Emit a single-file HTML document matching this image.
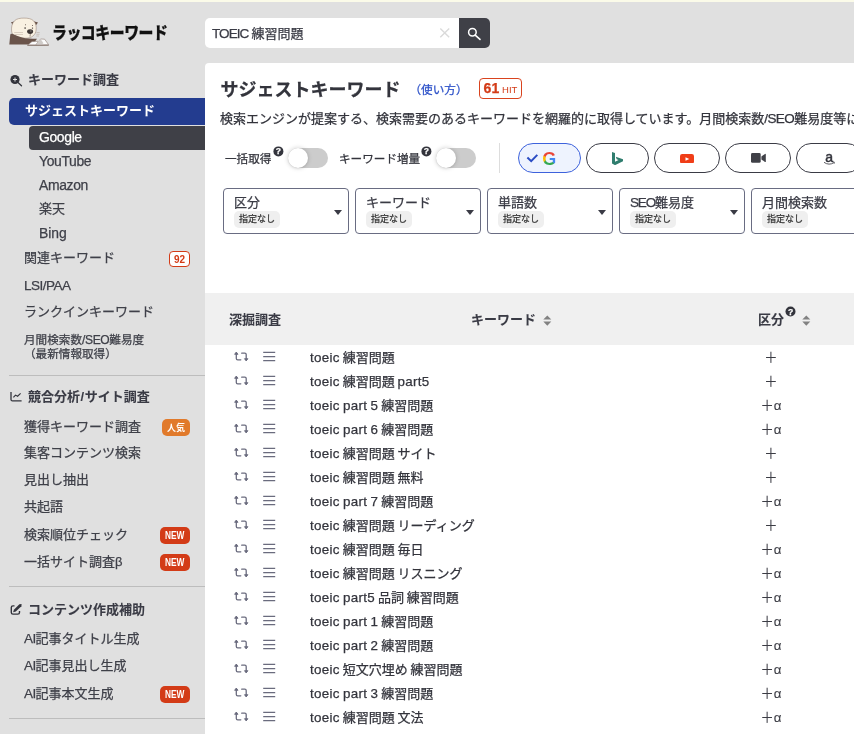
<!DOCTYPE html>
<html lang="ja">
<head>
<meta charset="utf-8">
<title>ラッコキーワード</title>
<style>
*{box-sizing:border-box}
html,body{margin:0;padding:0}
body{width:854px;height:734px;overflow:hidden;position:relative;background:#e0e0e0;
 font-family:"Liberation Sans","Noto Sans CJK JP",sans-serif;color:#3a3b45;font-size:13px;opacity:.999;word-spacing:-.054em;-webkit-text-stroke:.25px}
.abs{position:absolute;white-space:nowrap}
.l{font-size:1.03em;letter-spacing:.022em}
.u{font-size:1.04em;letter-spacing:-.045em}
.m{font-size:1.07em;letter-spacing:-.025em}
#topband{left:0;top:0;width:854px;height:2px;background:#fbfbe9}
/* header */
#logotext{left:52px;top:19.500px;height:28px;line-height:28px;font-size:17px;font-weight:900;color:#111;
 transform-origin:0 50%;transform:scaleX(.875);letter-spacing:-.5px}
#search{left:205px;top:18px;width:254px;height:30px;background:#fff;border-radius:5px 0 0 5px}
#search .t{left:7px;top:1.300px;line-height:30px;font-size:13px;color:#3a3b45}
#search .x{left:232px;top:0;line-height:29px;font-size:19px;color:#bbb;font-weight:400}
#sbtn{left:459px;top:18px;width:31px;height:30px;background:#3f4047;border-radius:0 5px 5px 0}
/* sidebar */
.sh{left:28px;-webkit-text-stroke:.08px;font-size:13px;font-weight:700;color:#3a3b45;height:20px;line-height:20px}
.si{left:24px;font-size:13px;color:#3f4049;height:20px;line-height:20px}
.ss{left:39px;font-size:13px;color:#3f4049;height:20px;line-height:20px}
.hr{left:9px;width:196px;height:1px;background:#bdbdbd}
.bdg{height:17px;line-height:18px;border-radius:5px;color:#fff;font-size:9px;font-weight:700;text-align:center;-webkit-text-stroke:0}
.bdg b{display:inline-block;transform:scaleX(.83);font-size:10px;line-height:18px;vertical-align:top}
.new{left:160px;width:30px;background:#d33b17}
.pop{left:162px;width:28px;background:#e17a2b}
/* main */
#main{left:205px;top:63px;width:660px;height:680px;background:#fff;border-radius:4px 0 0 0}
#thead{left:205px;top:293px;width:649px;height:52px;background:#f0f0f0}
.th{-webkit-text-stroke:.08px;font-size:13px;font-weight:700;color:#3a3b45;height:20px;line-height:20px;top:310px}
.fbox{top:188px;width:126px;height:46px;border:1px solid #696c82;border-radius:4px;background:#fff}
.fbox .t{left:10px;top:4.700px;font-size:13px;line-height:18px;color:#3a3b45}
.fbox .c{left:10px;top:22px;height:17px;line-height:17px;font-size:9px;padding:0 5px;background:#efefef;border-radius:5px;color:#333}
.fbox .v{left:110px;top:20.500px;width:0;height:0;border-left:4.5px solid transparent;border-right:4.5px solid transparent;border-top:5px solid #3a3b45}
.pill{top:143px;width:63px;height:30px;border:1px solid #3a3b45;border-radius:15px;background:#fff}
.tog{top:148px;width:40px;height:20px;border-radius:10px;background:#ccc}
.tog i{position:absolute;left:0;top:0;width:20px;height:20px;border-radius:50%;background:#fff;box-shadow:0 0 5px rgba(0,0,0,.2),0 1px 2px rgba(0,0,0,.06)}
.q{width:10px;height:10px;border-radius:50%;background:#33343c;color:#fff;font-size:8.500px;font-weight:700;line-height:10px;text-align:center}
.row{left:205px;width:649px;height:24px;line-height:24px;font-size:13px;color:#33343c}
.row .a{left:28px;top:6px}
.row .b{left:58px;top:6px}
.row .k{left:105px;top:.600px}
.row .p{left:536px;width:60px;top:1px;text-align:center;font-size:13.300px;-webkit-text-stroke:.1px;color:#3c3d45}
svg{display:block}
</style>
</head>
<body>
<div class="abs" id="topband"></div>

<!-- logo -->
<svg class="abs" id="logo" style="left:4px;top:12px" width="50" height="38" viewBox="4 12 50 38">
 <path d="M11 22.200 L15.500 21.300 L13 25.500Z M38 22.600 L33.500 21.300 L35.800 25.500Z" fill="#6a544a"/>
 <path d="M11.600 31 C11.200 27 12 23.300 14.500 20.800 C16.800 18.600 20 18.100 24 18.100 C28 18.100 31.300 18.600 33.500 20.800 C36 23.300 36.500 26.500 36.100 30 C35.700 35 31.500 38.200 26 38.200 C21 38.200 17 37 14 35 C12.500 34 11.800 33 11.600 31Z" fill="#f9f1e2" stroke="#8a7468" stroke-width=".5"/>
 <ellipse cx="30.100" cy="31.600" rx="3" ry="2.400" fill="#3c3533"/>
 <ellipse cx="30.800" cy="31" rx="1" ry=".7" fill="#77706d"/>
 <circle cx="25.100" cy="28.100" r=".8" fill="#3c3533"/><circle cx="32.500" cy="28.100" r=".7" fill="#3c3533"/>
 <circle cx="25.500" cy="24.700" r=".5" fill="#5a4a44"/><circle cx="32.500" cy="25.500" r=".5" fill="#5a4a44"/>
 <path d="M30.300 34 L30 36.600" stroke="#5a4a44" stroke-width=".6" fill="none"/>
 <path d="M14.200 32.500 H23 M15 34.500 H23" stroke="#cdbfb2" stroke-width=".7" fill="none"/>
 <path d="M36.400 32.500 H39.700 M36.400 34.300 H39.500 M36.200 36 H39" stroke="#b8aca3" stroke-width=".6" fill="none"/>
 <path d="M9.300 44.400 L10.200 35.200 C10.400 33.700 11.300 33.400 12.600 33.900 C16 35.300 19 36.600 22 37.400 C26 38.400 31 38.700 37 38.800 L35 41.500 L31 44.400Z" fill="#6a544a"/>
 <path d="M27.600 45 L32 41.600 L38.400 41.300 L36 45Z" fill="#fbfbfb" stroke="#7a665c" stroke-width=".5"/>
 <path d="M36 45 L40.600 39 L44.600 39.200 L48.600 44.700Z" fill="#fbfbfb" stroke="#7a665c" stroke-width=".5"/>
 <path d="M38.400 41.300 L40.600 39 L43.500 43.200 L41 44.800 L36 45Z" fill="#cfcbc8"/>
 <path d="M27.400 45.300 H48.800" stroke="#6a544a" stroke-width=".7"/>
</svg>
<div class="abs" id="logotext">ラッコキーワード</div>

<!-- search -->
<div class="abs" id="search"><span class="abs t"><span class="u" style="letter-spacing:-.068em">TOEIC</span> 練習問題</span><svg class="abs" style="left:234px;top:9px" width="12" height="12" viewBox="0 0 12 12"><path d="M1.300 1.400 L10.200 10.200 M10.200 1.400 L1.300 10.200" stroke="#dadada" stroke-width="1.400" fill="none"/></svg></div>
<div class="abs" id="sbtn">
 <svg style="position:absolute;left:7px;top:8px" width="16" height="16" viewBox="0 0 16 16"><circle cx="6.400" cy="6.300" r="3.800" fill="none" stroke="#fff" stroke-width="1.500"/><path d="M9.200 9.100 L14 13.400" stroke="#fff" stroke-width="1.600" stroke-linecap="round"/></svg>
</div>

<!-- sidebar -->
<svg class="abs" style="left:9px;top:73px" width="14" height="14" viewBox="9 73 14 14"><circle cx="15" cy="79.500" r="4.600" fill="#33343c"/><path d="M13 79.500 H17 M15 77.500 V81.500" stroke="#e0e0e0" stroke-width="1" fill="none"/><path d="M18 82.600 L21.500 85.700" stroke="#33343c" stroke-width="1.300" stroke-linecap="round"/></svg>
<div class="abs sh" style="top:70.400px">キーワード調査</div>
<div class="abs" style="left:9px;top:98px;width:196px;height:27px;background:#233c8f;border-radius:5px 0 0 5px"></div>
<div class="abs si" style="top:100.500px;left:25px;color:#fff;font-weight:700;-webkit-text-stroke:0">サジェストキーワード</div>
<div class="abs" style="left:29px;top:126px;width:176px;height:24px;background:#3f4047;border-radius:4px 0 0 4px"></div>
<div class="abs ss" style="top:127px;color:#fff"><span class="m">Google</span></div>
<div class="abs ss" style="top:151px"><span class="m">YouTube</span></div>
<div class="abs ss" style="top:175px"><span class="m">Amazon</span></div>
<div class="abs ss" style="top:199px">楽天</div>
<div class="abs ss" style="top:223px"><span class="m" style="letter-spacing:0">Bing</span></div>
<div class="abs si" style="top:248px">関連キーワード</div>
<div class="abs" style="left:169px;top:251px;width:21px;height:16px;border:1px solid #d33b17;border-radius:4px;background:#fff;color:#d33b17;font-size:10px;font-weight:700;line-height:16.400px;text-align:center;-webkit-text-stroke:0">92</div>
<div class="abs si" style="top:276px"><span class="u" style="letter-spacing:-.038em">LSI/PAA</span></div>
<div class="abs si" style="top:302px">ランクインキーワード</div>
<div class="abs si" style="top:333px;font-size:11.600px;line-height:13px;height:26px">月間検索数<span class="u" style="letter-spacing:-.03em">/SEO</span>難易度<br>（最新情報取得）</div>
<div class="abs hr" style="top:375px"></div>

<svg class="abs" style="left:9px;top:390px" width="14" height="13" viewBox="9 390 14 13"><path d="M11 392 V399.400 Q11 400.900 12.500 400.900 H21.600" fill="none" stroke="#33343c" stroke-width="1.300"/><path d="M13.400 397.400 L15.500 395.100 L17.600 396.200 L20.600 393.400" fill="none" stroke="#33343c" stroke-width="1.150"/></svg>
<div class="abs sh" style="top:387.400px">競合分析<span style="margin:0 .6px">/</span>サイト調査</div>
<div class="abs si" style="top:417px">獲得キーワード調査</div>
<div class="abs bdg pop" style="top:419px">人気</div>
<div class="abs si" style="top:443px">集客コンテンツ検索</div>
<div class="abs si" style="top:470px">見出し抽出</div>
<div class="abs si" style="top:497px">共起語</div>
<div class="abs si" style="top:525px">検索順位チェック</div>
<div class="abs bdg new" style="top:527px"><b>NEW</b></div>
<div class="abs si" style="top:552px">一括サイト調査β</div>
<div class="abs bdg new" style="top:554px"><b>NEW</b></div>
<div class="abs hr" style="top:586px"></div>

<svg class="abs" style="left:9px;top:602px" width="14" height="14" viewBox="9 602 14 14"><path d="M14.500 605.900 H13 Q11.300 605.900 11.300 607.600 V612.400 Q11.300 614.100 13 614.100 H17.800 Q19.500 614.100 19.500 612.400 V611" fill="none" stroke="#33343c" stroke-width="1.400"/><path d="M13.100 612.300 L13.900 609.700 L19.400 604.200 L21.600 604 L21.400 606.200 L15.800 611.600Z" fill="#33343c"/></svg>
<div class="abs sh" style="top:599.500px">コンテンツ作成補助</div>
<div class="abs si" style="top:629px"><span class="u">AI</span>記事タイトル生成</div>
<div class="abs si" style="top:656px"><span class="u">AI</span>記事見出し生成</div>
<div class="abs si" style="top:684px"><span class="u">AI</span>記事本文生成</div>
<div class="abs bdg new" style="top:686px"><b>NEW</b></div>
<div class="abs hr" style="top:718px"></div>

<!-- main panel -->
<div class="abs" id="main"></div>
<div class="abs" style="left:220.500px;top:77px;height:26px;line-height:26px;font-size:18px;font-weight:700;color:#33343c">サジェストキーワード</div>
<div class="abs" style="left:409.500px;top:79.700px;height:20px;line-height:20px;font-size:11.600px;color:#2b50c8">（使い方）</div>
<div class="abs" style="left:479px;top:78px;width:43px;height:21px;border:1px solid #d9431e;border-radius:4px;background:#fff;color:#d33b17;line-height:19px;text-align:center"><span style="font-size:14px;font-weight:700">61</span> <span style="font-size:9.500px;-webkit-text-stroke:0">HIT</span></div>
<div class="abs" style="left:220px;top:109px;height:20px;line-height:20px;font-size:13px;color:#33343c">検索エンジンが提案する、検索需要のあるキーワードを網羅的に取得しています。月間検索数<span class="u">/SEO</span>難易度等に</div>

<div class="abs" style="left:225px;top:149px;height:20px;line-height:20px;font-size:11.600px;color:#33343c">一括取得</div>
<div class="abs q" style="left:273px;top:146px;transform:translate(.4px,.4px)">?</div>
<div class="abs tog" style="left:288px"><i></i></div>
<div class="abs" style="left:339px;top:149px;height:20px;line-height:20px;font-size:11.600px;color:#33343c">キーワード増量</div>
<div class="abs q" style="left:421px;top:146px;transform:translate(.4px,.4px)">?</div>
<div class="abs tog" style="left:436px"><i></i></div>
<div class="abs" style="left:499px;top:143px;width:1px;height:30px;background:#ddd"></div>

<div class="abs pill" style="left:518px;border-color:#3d62dc;background:#eef3fe"></div>
<svg class="abs" style="left:525px;top:152px" width="14" height="12" viewBox="525 152 14 12"><path d="M527.400 157.500 L531.200 161.200 L537.300 154.900" fill="none" stroke="#2a4cc4" stroke-width="2"/></svg>
<div class="abs" style="left:542px;top:147px;transform:translate(.3px,1.200px);height:22px;line-height:22px;font-size:18px;font-weight:700;-webkit-text-stroke:0;color:transparent;background:conic-gradient(from 0deg at 45% 46%,#ea4335 0 66deg,#4285f4 66deg 132deg,#34a853 132deg 232deg,#fbbc05 232deg 298deg,#ea4335 298deg);-webkit-background-clip:text;background-clip:text">G</div>
<div class="abs pill" style="left:586px"></div>
<svg class="abs" style="left:612px;top:151.800px" width="11" height="13.200" viewBox="0 0 11 13.200"><path d="M0 0 L3 1.100 V9.800 L6.600 8.100 L4.700 7.200 L3.800 4.700 L11 7.200 V9.200 L3 13.200 L0 11.400Z" fill="#2f7d6e"/></svg>
<div class="abs pill" style="left:654px;width:66px"></div>
<svg class="abs" style="left:680px;top:153.500px" width="14" height="9.700" viewBox="0 0 14 9.700"><rect x="0" y="0" width="14" height="9.700" rx="2.200" fill="#f03d17"/><path d="M5.500 3.200 L9.300 4.900 L5.500 6.700Z" fill="#fff"/></svg>
<div class="abs pill" style="left:725px;width:66px"></div>
<svg class="abs" style="left:750.800px;top:153.300px" width="15" height="9.800" viewBox="0 0 15 9.800"><rect x="0" y="0" width="9.700" height="9.800" rx="1.400" fill="#3f4047"/><path d="M10.400 3.400 L14 .9 Q14.800 .5 14.800 1.400 V8.400 Q14.800 9.300 14 8.900 L10.400 6.400Z" fill="#3f4047"/></svg>
<div class="abs pill" style="left:796px;width:66px"></div>
<div class="abs" style="left:825.200px;top:148.700px;height:16px;line-height:16px;font-size:14px;font-weight:400;-webkit-text-stroke:.5px;color:#33343c">a</div>
<svg class="abs" style="left:823px;top:160.500px" width="13" height="5" viewBox="823 160 13 5"><path d="M824 161.300 Q829 164.800 834 161.600" fill="none" stroke="#33343c" stroke-width=".8"/><path d="M832.800 160.900 L834.600 161.200 L834.200 162.800" fill="none" stroke="#33343c" stroke-width=".6"/></svg>

<div class="abs fbox" style="left:223px"><span class="abs t">区分</span><span class="abs c">指定なし</span><span class="abs v"></span></div>
<div class="abs fbox" style="left:355px"><span class="abs t">キーワード</span><span class="abs c">指定なし</span><span class="abs v"></span></div>
<div class="abs fbox" style="left:487px"><span class="abs t">単語数</span><span class="abs c">指定なし</span><span class="abs v"></span></div>
<div class="abs fbox" style="left:619px"><span class="abs t"><span class="u" style="letter-spacing:-.085em">SEO</span>難易度</span><span class="abs c">指定なし</span><span class="abs v"></span></div>
<div class="abs fbox" style="left:751px"><span class="abs t">月間検索数</span><span class="abs c">指定なし</span><span class="abs v"></span></div>

<div class="abs" id="thead"></div>
<div class="abs th" style="left:229px">深掘調査</div>
<div class="abs th" style="left:471px">キーワード</div>
<div class="abs th" style="left:758px">区分</div>
<div class="abs q" style="left:785px;top:306px;transform:translate(.5px,.5px)">?</div>
<svg class="abs sort" style="left:543px;top:315px" width="9" height="11" viewBox="0 0 9 11"><path d="M.3 4.600 L4.300 .4 L8.300 4.600Z M.3 6.400 L4.300 10.800 L8.300 6.400Z" fill="#828282"/></svg>
<svg class="abs sort" style="left:802px;top:315px" width="9" height="11" viewBox="0 0 9 11"><path d="M.3 4.600 L4.300 .4 L8.300 4.600Z M.3 6.400 L4.300 10.800 L8.300 6.400Z" fill="#828282"/></svg>

<!-- rows -->
<div class="abs row" style="top:345px"><svg class="abs a" width="17" height="12" viewBox="0 0 17 12"><path d="M3.300 2 V7.400 Q3.300 8.800 4.700 8.800 H7.800 M8.700 2.200 H11.800 Q13.200 2.200 13.200 3.600 V9" fill="none" stroke="#6a6b7e" stroke-width="1.300" stroke-linecap="round"/><path d="M1.600 3.300 L3.300 1.100 L5 3.300Z M11.500 7.700 L13.200 9.900 L14.900 7.700Z" fill="#6a6b7e" stroke="#6a6b7e" stroke-width=".9" stroke-linejoin="round"/></svg><svg class="abs b" width="14" height="12" viewBox="0 0 14 12"><path d="M.2 1.400 H12.200 M.2 5.600 H12.200 M.2 9.700 H12.200" stroke="#6a6b7e" stroke-width="1.200"/></svg><span class="abs k"><span class="l">toeic</span> 練習問題</span><span class="abs p">＋</span></div>
<div class="abs row" style="top:369px"><svg class="abs a" width="17" height="12" viewBox="0 0 17 12"><path d="M3.300 2 V7.400 Q3.300 8.800 4.700 8.800 H7.800 M8.700 2.200 H11.800 Q13.200 2.200 13.200 3.600 V9" fill="none" stroke="#6a6b7e" stroke-width="1.300" stroke-linecap="round"/><path d="M1.600 3.300 L3.300 1.100 L5 3.300Z M11.500 7.700 L13.200 9.900 L14.900 7.700Z" fill="#6a6b7e" stroke="#6a6b7e" stroke-width=".9" stroke-linejoin="round"/></svg><svg class="abs b" width="14" height="12" viewBox="0 0 14 12"><path d="M.2 1.400 H12.200 M.2 5.600 H12.200 M.2 9.700 H12.200" stroke="#6a6b7e" stroke-width="1.200"/></svg><span class="abs k"><span class="l">toeic</span> 練習問題 <span class="l">part5</span></span><span class="abs p">＋</span></div>
<div class="abs row" style="top:393px"><svg class="abs a" width="17" height="12" viewBox="0 0 17 12"><path d="M3.300 2 V7.400 Q3.300 8.800 4.700 8.800 H7.800 M8.700 2.200 H11.800 Q13.200 2.200 13.200 3.600 V9" fill="none" stroke="#6a6b7e" stroke-width="1.300" stroke-linecap="round"/><path d="M1.600 3.300 L3.300 1.100 L5 3.300Z M11.500 7.700 L13.200 9.900 L14.900 7.700Z" fill="#6a6b7e" stroke="#6a6b7e" stroke-width=".9" stroke-linejoin="round"/></svg><svg class="abs b" width="14" height="12" viewBox="0 0 14 12"><path d="M.2 1.400 H12.200 M.2 5.600 H12.200 M.2 9.700 H12.200" stroke="#6a6b7e" stroke-width="1.200"/></svg><span class="abs k"><span class="l">toeic part 5</span> 練習問題</span><span class="abs p">＋<span class="al">α</span></span></div>
<div class="abs row" style="top:417px"><svg class="abs a" width="17" height="12" viewBox="0 0 17 12"><path d="M3.300 2 V7.400 Q3.300 8.800 4.700 8.800 H7.800 M8.700 2.200 H11.800 Q13.200 2.200 13.200 3.600 V9" fill="none" stroke="#6a6b7e" stroke-width="1.300" stroke-linecap="round"/><path d="M1.600 3.300 L3.300 1.100 L5 3.300Z M11.500 7.700 L13.200 9.900 L14.900 7.700Z" fill="#6a6b7e" stroke="#6a6b7e" stroke-width=".9" stroke-linejoin="round"/></svg><svg class="abs b" width="14" height="12" viewBox="0 0 14 12"><path d="M.2 1.400 H12.200 M.2 5.600 H12.200 M.2 9.700 H12.200" stroke="#6a6b7e" stroke-width="1.200"/></svg><span class="abs k"><span class="l">toeic part 6</span> 練習問題</span><span class="abs p">＋<span class="al">α</span></span></div>
<div class="abs row" style="top:441px"><svg class="abs a" width="17" height="12" viewBox="0 0 17 12"><path d="M3.300 2 V7.400 Q3.300 8.800 4.700 8.800 H7.800 M8.700 2.200 H11.800 Q13.200 2.200 13.200 3.600 V9" fill="none" stroke="#6a6b7e" stroke-width="1.300" stroke-linecap="round"/><path d="M1.600 3.300 L3.300 1.100 L5 3.300Z M11.500 7.700 L13.200 9.900 L14.900 7.700Z" fill="#6a6b7e" stroke="#6a6b7e" stroke-width=".9" stroke-linejoin="round"/></svg><svg class="abs b" width="14" height="12" viewBox="0 0 14 12"><path d="M.2 1.400 H12.200 M.2 5.600 H12.200 M.2 9.700 H12.200" stroke="#6a6b7e" stroke-width="1.200"/></svg><span class="abs k"><span class="l">toeic</span> 練習問題 サイト</span><span class="abs p">＋</span></div>
<div class="abs row" style="top:465px"><svg class="abs a" width="17" height="12" viewBox="0 0 17 12"><path d="M3.300 2 V7.400 Q3.300 8.800 4.700 8.800 H7.800 M8.700 2.200 H11.800 Q13.200 2.200 13.200 3.600 V9" fill="none" stroke="#6a6b7e" stroke-width="1.300" stroke-linecap="round"/><path d="M1.600 3.300 L3.300 1.100 L5 3.300Z M11.500 7.700 L13.200 9.900 L14.900 7.700Z" fill="#6a6b7e" stroke="#6a6b7e" stroke-width=".9" stroke-linejoin="round"/></svg><svg class="abs b" width="14" height="12" viewBox="0 0 14 12"><path d="M.2 1.400 H12.200 M.2 5.600 H12.200 M.2 9.700 H12.200" stroke="#6a6b7e" stroke-width="1.200"/></svg><span class="abs k"><span class="l">toeic</span> 練習問題 無料</span><span class="abs p">＋</span></div>
<div class="abs row" style="top:489px"><svg class="abs a" width="17" height="12" viewBox="0 0 17 12"><path d="M3.300 2 V7.400 Q3.300 8.800 4.700 8.800 H7.800 M8.700 2.200 H11.800 Q13.200 2.200 13.200 3.600 V9" fill="none" stroke="#6a6b7e" stroke-width="1.300" stroke-linecap="round"/><path d="M1.600 3.300 L3.300 1.100 L5 3.300Z M11.500 7.700 L13.200 9.900 L14.900 7.700Z" fill="#6a6b7e" stroke="#6a6b7e" stroke-width=".9" stroke-linejoin="round"/></svg><svg class="abs b" width="14" height="12" viewBox="0 0 14 12"><path d="M.2 1.400 H12.200 M.2 5.600 H12.200 M.2 9.700 H12.200" stroke="#6a6b7e" stroke-width="1.200"/></svg><span class="abs k"><span class="l">toeic part 7</span> 練習問題</span><span class="abs p">＋<span class="al">α</span></span></div>
<div class="abs row" style="top:513px"><svg class="abs a" width="17" height="12" viewBox="0 0 17 12"><path d="M3.300 2 V7.400 Q3.300 8.800 4.700 8.800 H7.800 M8.700 2.200 H11.800 Q13.200 2.200 13.200 3.600 V9" fill="none" stroke="#6a6b7e" stroke-width="1.300" stroke-linecap="round"/><path d="M1.600 3.300 L3.300 1.100 L5 3.300Z M11.500 7.700 L13.200 9.900 L14.900 7.700Z" fill="#6a6b7e" stroke="#6a6b7e" stroke-width=".9" stroke-linejoin="round"/></svg><svg class="abs b" width="14" height="12" viewBox="0 0 14 12"><path d="M.2 1.400 H12.200 M.2 5.600 H12.200 M.2 9.700 H12.200" stroke="#6a6b7e" stroke-width="1.200"/></svg><span class="abs k"><span class="l">toeic</span> 練習問題 リーディング</span><span class="abs p">＋</span></div>
<div class="abs row" style="top:537px"><svg class="abs a" width="17" height="12" viewBox="0 0 17 12"><path d="M3.300 2 V7.400 Q3.300 8.800 4.700 8.800 H7.800 M8.700 2.200 H11.800 Q13.200 2.200 13.200 3.600 V9" fill="none" stroke="#6a6b7e" stroke-width="1.300" stroke-linecap="round"/><path d="M1.600 3.300 L3.300 1.100 L5 3.300Z M11.500 7.700 L13.200 9.900 L14.900 7.700Z" fill="#6a6b7e" stroke="#6a6b7e" stroke-width=".9" stroke-linejoin="round"/></svg><svg class="abs b" width="14" height="12" viewBox="0 0 14 12"><path d="M.2 1.400 H12.200 M.2 5.600 H12.200 M.2 9.700 H12.200" stroke="#6a6b7e" stroke-width="1.200"/></svg><span class="abs k"><span class="l">toeic</span> 練習問題 毎日</span><span class="abs p">＋<span class="al">α</span></span></div>
<div class="abs row" style="top:561px"><svg class="abs a" width="17" height="12" viewBox="0 0 17 12"><path d="M3.300 2 V7.400 Q3.300 8.800 4.700 8.800 H7.800 M8.700 2.200 H11.800 Q13.200 2.200 13.200 3.600 V9" fill="none" stroke="#6a6b7e" stroke-width="1.300" stroke-linecap="round"/><path d="M1.600 3.300 L3.300 1.100 L5 3.300Z M11.500 7.700 L13.200 9.900 L14.900 7.700Z" fill="#6a6b7e" stroke="#6a6b7e" stroke-width=".9" stroke-linejoin="round"/></svg><svg class="abs b" width="14" height="12" viewBox="0 0 14 12"><path d="M.2 1.400 H12.200 M.2 5.600 H12.200 M.2 9.700 H12.200" stroke="#6a6b7e" stroke-width="1.200"/></svg><span class="abs k"><span class="l">toeic</span> 練習問題 リスニング</span><span class="abs p">＋<span class="al">α</span></span></div>
<div class="abs row" style="top:585px"><svg class="abs a" width="17" height="12" viewBox="0 0 17 12"><path d="M3.300 2 V7.400 Q3.300 8.800 4.700 8.800 H7.800 M8.700 2.200 H11.800 Q13.200 2.200 13.200 3.600 V9" fill="none" stroke="#6a6b7e" stroke-width="1.300" stroke-linecap="round"/><path d="M1.600 3.300 L3.300 1.100 L5 3.300Z M11.500 7.700 L13.200 9.900 L14.900 7.700Z" fill="#6a6b7e" stroke="#6a6b7e" stroke-width=".9" stroke-linejoin="round"/></svg><svg class="abs b" width="14" height="12" viewBox="0 0 14 12"><path d="M.2 1.400 H12.200 M.2 5.600 H12.200 M.2 9.700 H12.200" stroke="#6a6b7e" stroke-width="1.200"/></svg><span class="abs k"><span class="l">toeic part5</span> 品詞 練習問題</span><span class="abs p">＋<span class="al">α</span></span></div>
<div class="abs row" style="top:609px"><svg class="abs a" width="17" height="12" viewBox="0 0 17 12"><path d="M3.300 2 V7.400 Q3.300 8.800 4.700 8.800 H7.800 M8.700 2.200 H11.800 Q13.200 2.200 13.200 3.600 V9" fill="none" stroke="#6a6b7e" stroke-width="1.300" stroke-linecap="round"/><path d="M1.600 3.300 L3.300 1.100 L5 3.300Z M11.500 7.700 L13.200 9.900 L14.900 7.700Z" fill="#6a6b7e" stroke="#6a6b7e" stroke-width=".9" stroke-linejoin="round"/></svg><svg class="abs b" width="14" height="12" viewBox="0 0 14 12"><path d="M.2 1.400 H12.200 M.2 5.600 H12.200 M.2 9.700 H12.200" stroke="#6a6b7e" stroke-width="1.200"/></svg><span class="abs k"><span class="l">toeic part 1</span> 練習問題</span><span class="abs p">＋<span class="al">α</span></span></div>
<div class="abs row" style="top:633px"><svg class="abs a" width="17" height="12" viewBox="0 0 17 12"><path d="M3.300 2 V7.400 Q3.300 8.800 4.700 8.800 H7.800 M8.700 2.200 H11.800 Q13.200 2.200 13.200 3.600 V9" fill="none" stroke="#6a6b7e" stroke-width="1.300" stroke-linecap="round"/><path d="M1.600 3.300 L3.300 1.100 L5 3.300Z M11.500 7.700 L13.200 9.900 L14.900 7.700Z" fill="#6a6b7e" stroke="#6a6b7e" stroke-width=".9" stroke-linejoin="round"/></svg><svg class="abs b" width="14" height="12" viewBox="0 0 14 12"><path d="M.2 1.400 H12.200 M.2 5.600 H12.200 M.2 9.700 H12.200" stroke="#6a6b7e" stroke-width="1.200"/></svg><span class="abs k"><span class="l">toeic part 2</span> 練習問題</span><span class="abs p">＋<span class="al">α</span></span></div>
<div class="abs row" style="top:657px"><svg class="abs a" width="17" height="12" viewBox="0 0 17 12"><path d="M3.300 2 V7.400 Q3.300 8.800 4.700 8.800 H7.800 M8.700 2.200 H11.800 Q13.200 2.200 13.200 3.600 V9" fill="none" stroke="#6a6b7e" stroke-width="1.300" stroke-linecap="round"/><path d="M1.600 3.300 L3.300 1.100 L5 3.300Z M11.500 7.700 L13.200 9.900 L14.900 7.700Z" fill="#6a6b7e" stroke="#6a6b7e" stroke-width=".9" stroke-linejoin="round"/></svg><svg class="abs b" width="14" height="12" viewBox="0 0 14 12"><path d="M.2 1.400 H12.200 M.2 5.600 H12.200 M.2 9.700 H12.200" stroke="#6a6b7e" stroke-width="1.200"/></svg><span class="abs k"><span class="l">toeic</span> 短文穴埋め 練習問題</span><span class="abs p">＋<span class="al">α</span></span></div>
<div class="abs row" style="top:681px"><svg class="abs a" width="17" height="12" viewBox="0 0 17 12"><path d="M3.300 2 V7.400 Q3.300 8.800 4.700 8.800 H7.800 M8.700 2.200 H11.800 Q13.200 2.200 13.200 3.600 V9" fill="none" stroke="#6a6b7e" stroke-width="1.300" stroke-linecap="round"/><path d="M1.600 3.300 L3.300 1.100 L5 3.300Z M11.500 7.700 L13.200 9.900 L14.900 7.700Z" fill="#6a6b7e" stroke="#6a6b7e" stroke-width=".9" stroke-linejoin="round"/></svg><svg class="abs b" width="14" height="12" viewBox="0 0 14 12"><path d="M.2 1.400 H12.200 M.2 5.600 H12.200 M.2 9.700 H12.200" stroke="#6a6b7e" stroke-width="1.200"/></svg><span class="abs k"><span class="l">toeic part 3</span> 練習問題</span><span class="abs p">＋<span class="al">α</span></span></div>
<div class="abs row" style="top:705px"><svg class="abs a" width="17" height="12" viewBox="0 0 17 12"><path d="M3.300 2 V7.400 Q3.300 8.800 4.700 8.800 H7.800 M8.700 2.200 H11.800 Q13.200 2.200 13.200 3.600 V9" fill="none" stroke="#6a6b7e" stroke-width="1.300" stroke-linecap="round"/><path d="M1.600 3.300 L3.300 1.100 L5 3.300Z M11.500 7.700 L13.200 9.900 L14.900 7.700Z" fill="#6a6b7e" stroke="#6a6b7e" stroke-width=".9" stroke-linejoin="round"/></svg><svg class="abs b" width="14" height="12" viewBox="0 0 14 12"><path d="M.2 1.400 H12.200 M.2 5.600 H12.200 M.2 9.700 H12.200" stroke="#6a6b7e" stroke-width="1.200"/></svg><span class="abs k"><span class="l">toeic</span> 練習問題 文法</span><span class="abs p">＋<span class="al">α</span></span></div>
</body>
</html>
